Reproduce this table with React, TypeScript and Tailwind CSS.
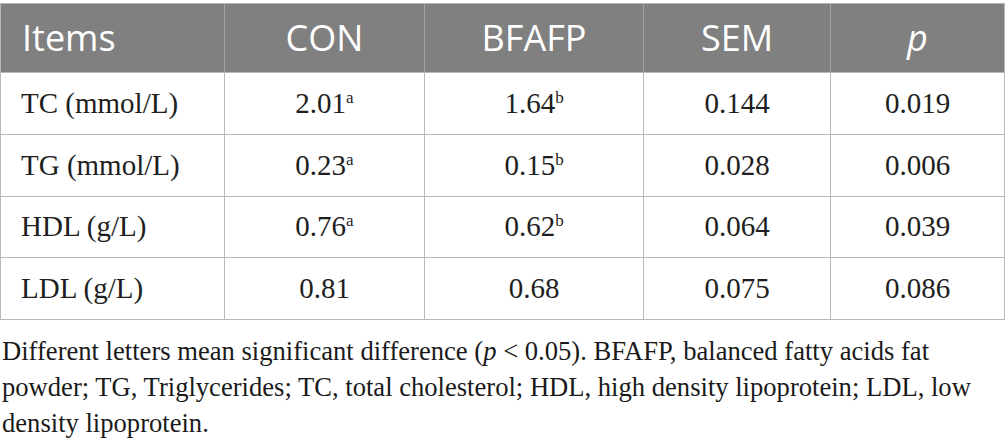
import React from 'react';

type Row = {
  item: string;
  con: string;
  conSup?: string;
  bfafp: string;
  bfafpSup?: string;
  sem: string;
  p: string;
};

const ROWS: Row[] = [
  { item: 'TC (mmol/L)', con: '2.01', conSup: 'a', bfafp: '1.64', bfafpSup: 'b', sem: '0.144', p: '0.019' },
  { item: 'TG (mmol/L)', con: '0.23', conSup: 'a', bfafp: '0.15', bfafpSup: 'b', sem: '0.028', p: '0.006' },
  { item: 'HDL (g/L)', con: '0.76', conSup: 'a', bfafp: '0.62', bfafpSup: 'b', sem: '0.064', p: '0.039' },
  { item: 'LDL (g/L)', con: '0.81', bfafp: '0.68', sem: '0.075', p: '0.086' },
];

// row heights measured off the figure (last one is a pixel shorter)
const ROW_H = ['h-[62px]', 'h-[62px]', 'h-[61px]', 'h-[62px]'];

const serif = "font-['Liberation_Serif','Times_New_Roman',serif]";
const sans = "font-['Open_Sans','Noto_Sans',sans-serif]";

function Value({ v, sup }: { v: string; sup?: string }) {
  return (
    <span>
      {v}
      {sup && <sup className="text-[17px] top-[-0.6em]">{sup}</sup>}
    </span>
  );
}

export default function App() {
  return (
    <div className="w-[1005px] bg-white pt-[3px]">
      <div className="border-t border-l border-[#b8b8b8]">
        <div className={`flex h-[69px] bg-[#808080] border-b border-[#b8b8b8] text-white text-[36px] ${sans}`}>
          <div className="w-[224px] flex items-center pl-[21px] border-r border-[#a2a2a2]">Items</div>
          <div className="w-[200px] flex items-center justify-center border-r border-[#a2a2a2]">CON</div>
          <div className="w-[219px] flex items-center justify-center border-r border-[#a2a2a2]">BFAFP</div>
          <div className="w-[187px] flex items-center justify-center border-r border-[#a2a2a2]">SEM</div>
          <div className="w-[174px] flex items-center justify-center border-r border-[#b8b8b8] italic">p</div>
        </div>

        {ROWS.map((r, i) => (
          <div
            key={r.item}
            className={`flex ${ROW_H[i]} border-b border-[#b8b8b8] text-[#1e1e1e] text-[29px] ${serif}`}
          >
            <div className="w-[224px] flex items-center pl-[20px] border-r border-[#b8b8b8]">{r.item}</div>
            <div className="w-[200px] flex items-center justify-center border-r border-[#b8b8b8]">
              <Value v={r.con} sup={r.conSup} />
            </div>
            <div className="w-[219px] flex items-center justify-center border-r border-[#b8b8b8]">
              <Value v={r.bfafp} sup={r.bfafpSup} />
            </div>
            <div className="w-[187px] flex items-center justify-center border-r border-[#b8b8b8]">{r.sem}</div>
            <div className="w-[174px] flex items-center justify-center border-r border-[#b8b8b8]">{r.p}</div>
          </div>
        ))}
      </div>

      <p className={`mt-[13px] pl-[2px] w-[1000px] text-[26.6px] leading-[36px] text-[#1a1a1a] ${serif}`}>
        Different letters mean significant difference (<i>p</i> &lt; 0.05). BFAFP, balanced fatty acids fat
        powder; TG, Triglycerides; TC, total cholesterol; HDL, high density lipoprotein; LDL, low density
        lipoprotein.
      </p>
    </div>
  );
}
